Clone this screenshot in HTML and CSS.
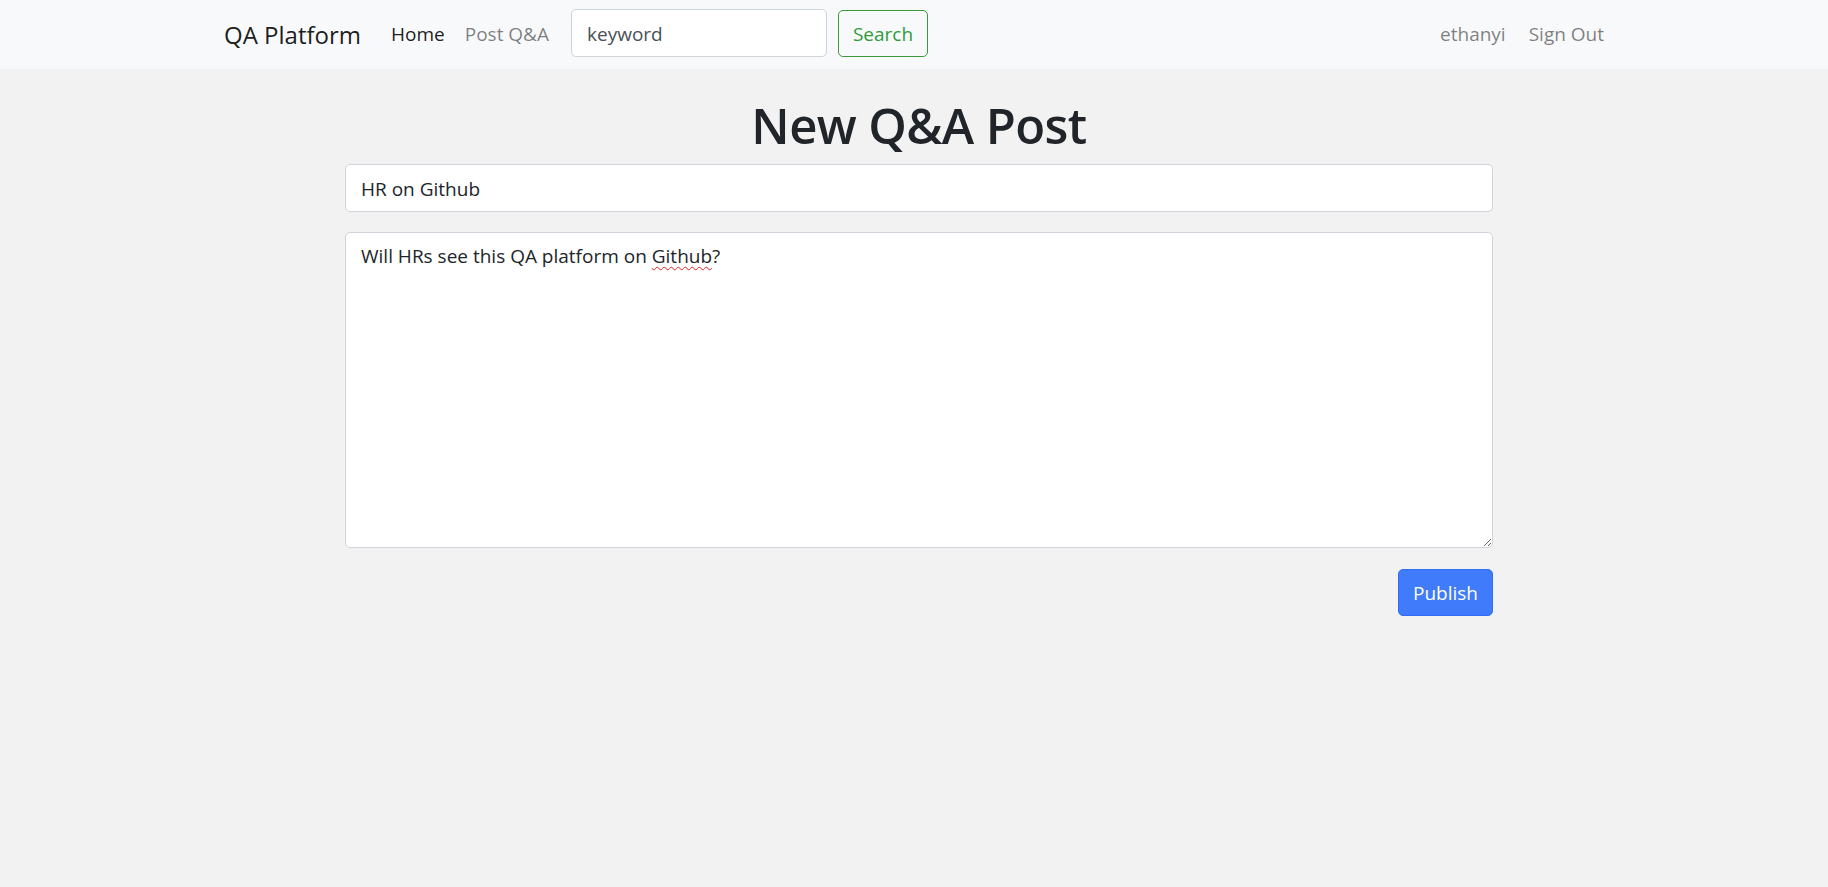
FILE: index.html
```html
<!DOCTYPE html>
<html lang="en">
<head>
<meta charset="utf-8">
<title>New Q&amp;A Post</title>
<link rel="stylesheet" href="styles.css">
</head>
<body>
<nav class="navbar">
  <div class="nav-container">
    <a class="brand" href="#">QA Platform</a>
    <a class="nav-link active" href="#">Home</a>
    <a class="nav-link" href="#">Post Q&amp;A</a>
    <form class="search-form">
      <input class="search-input" type="text" value="keyword">
      <button class="btn-search" type="button">Search</button>
    </form>
    <div class="nav-right">
      <a class="nav-link" href="#">ethanyi</a>
      <a class="nav-link" href="#">Sign Out</a>
    </div>
  </div>
</nav>
<main class="main">
  <h1 class="title">New Q&amp;A Post</h1>
  <input class="form-control" type="text" value="HR on Github">
  <div class="textarea">Will HRs see this QA platform on <span class="misspelled">Github</span>?</div>
  <div class="actions">
    <button class="btn-primary" type="button">Publish</button>
  </div>
</main>
</body>
</html>
```
FILE: styles.css
```css
* { box-sizing: border-box; }
html, body { margin: 0; padding: 0; }
body {
  background: #f2f2f2;
  font-family: "Open Sans", "Noto Sans", sans-serif;
  font-size: 20px;
  color: #212529;
  min-height: 887px;
}
.navbar {
  background: #f8f9fa;
  height: 69px;
  padding-top: 9px;
}
.nav-container {
  width: 1400px;
  margin: 0 auto;
  display: flex;
  align-items: center;
  height: 48px;
}
.brand {
  font-size: 24px;
  color: rgba(0,0,0,.9);
  text-decoration: none;
  margin-right: 20px;
  padding: 2px 0 0 10px;
}
.nav-link {
  color: rgba(0,0,0,.5);
  text-decoration: none;
  padding: 2px 10px 0;
  font-size: 19px;
}
.nav-link.active { color: rgba(0,0,0,.9); }
.search-form {
  display: flex;
  align-items: center;
  margin-left: 12px;
}
.search-input {
  width: 256px;
  height: 48px;
  border: 1px solid #ced4da;
  border-radius: 5px;
  background: #fff;
  padding: 2px 15px 0;
  font-family: inherit;
  font-size: 19px;
  color: #495057;
  outline: none;
}
.btn-search {
  margin-left: 11px;
  height: 47px;
  width: 90px;
  border: 1px solid #3c9a3c;
  border-radius: 5px;
  background: transparent;
  color: #2f9a3a;
  font-family: inherit;
  font-size: 19px;
  padding: 2px 0 0;
}
.nav-right {
  margin-left: auto;
  display: flex;
}
.nav-right .nav-link:last-child { padding-left: 13px; }
.main {
  width: 1158px;
  margin: 0 auto;
  padding-left: 10px;
  padding-top: 26px;
}
.title {
  margin: 0 0 9px;
  text-align: center;
  font-size: 49px;
  font-weight: 600;
  letter-spacing: -0.6px;
  line-height: 60px;
  color: #212529;
}
.form-control {
  display: block;
  width: 100%;
  height: 48px;
  border: 1px solid #ced4da;
  border-radius: 5px;
  background: #fff;
  padding: 1px 15px 0;
  font-family: inherit;
  font-size: 19px;
  color: #212529;
  outline: none;
}
.textarea {
  margin-top: 20px;
  width: 100%;
  height: 316px;
  border: 1px solid #ced4da;
  border-radius: 5px;
  background: #fff;
  padding: 8px 15px;
  font-size: 19px;
  line-height: 30px;
  color: #212529;
  resize: vertical;
  overflow: auto;
}
.misspelled {
  text-decoration: underline wavy #e02020;
  text-decoration-thickness: 1px;
  text-underline-offset: 3px;
}
.actions {
  display: flex;
  justify-content: flex-end;
  margin-top: 21px;
}
.btn-primary {
  height: 47px;
  width: 95px;
  border: 1px solid #2f6ff5;
  border-radius: 5px;
  background: #407bfb;
  color: #fff;
  font-family: inherit;
  font-size: 19px;
  padding: 1px 0 0;
}
```
